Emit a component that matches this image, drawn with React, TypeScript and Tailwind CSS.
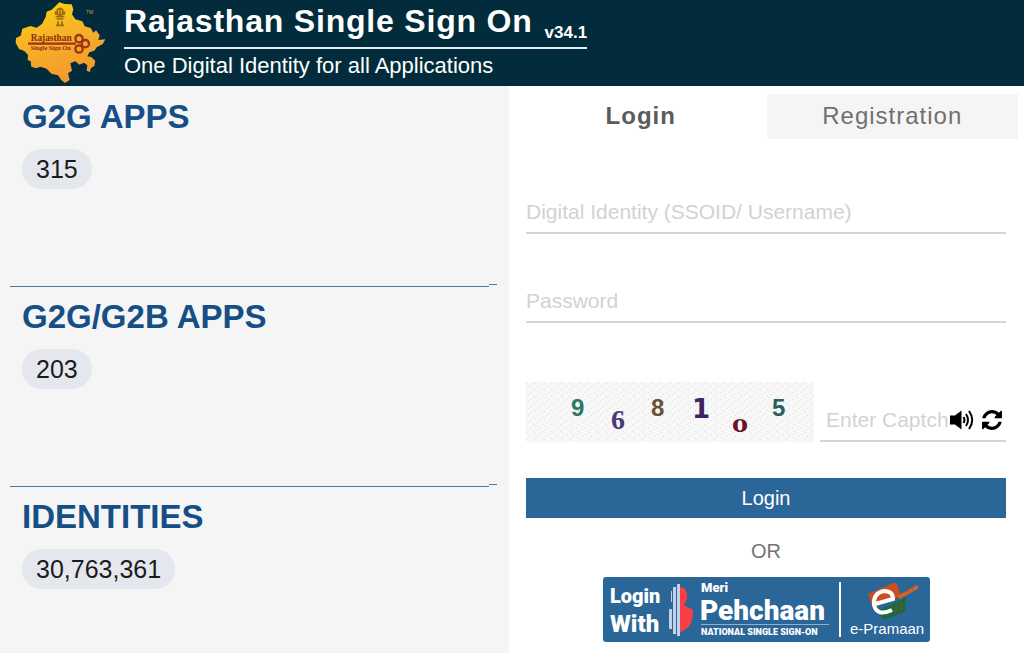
import { useState } from "react";

const stats = [
  { label: "G2G APPS", value: "315" },
  { label: "G2G/G2B APPS", value: "203" },
  { label: "IDENTITIES", value: "30,763,361" },
];

const inputClass =
  "w-full border-b-2 border-[#d5d5d5] bg-transparent text-[21px] leading-7 text-[#333] outline-none placeholder:text-[#d2d2d2] focus:border-[#2b6699]";

const tabClass =
  "pt-1 pb-[5px] text-2xl leading-9 tracking-[1px] text-[#707070] not-aria-selected:bg-[#f5f5f5] aria-selected:font-bold aria-selected:text-[#5c5c5c]";

function RajasthanLogo() {
  return (
    <svg viewBox="0 0 360 258" className="h-[86px] w-[120px] shrink-0" role="img" aria-label="Rajasthan Single Sign On">
      <defs>
        <linearGradient id="map" x1="0" y1="0" x2="0.35" y2="1">
          <stop offset="0" stopColor="#f8d808" />
          <stop offset="0.45" stopColor="#f7b526" />
          <stop offset="1" stopColor="#f49a2c" />
        </linearGradient>
      </defs>
      <path
        d="M166 19 L178 7 L194 12 L215 13 L220 28 L216 43 L226 58 L247 64 L254 79 L272 84 L280 98 L288 91 L299 106 L295 120 L316 118 L308 132 L290 142 L283 152 L268 157 L262 169 L274 171 L286 183 L283 198 L272 205 L270 216 L260 212 L262 196 L252 188 L238 194 L226 184 L211 190 L216 212 L204 220 L209 240 L195 249 L184 240 L174 226 L154 221 L140 206 L121 200 L108 205 L94 200 L92 184 L83 180 L84 165 L73 153 L57 147 L47 128 L48 114 L62 107 L67 86 L91 78 L110 83 L126 72 L137 51 L140 35 L155 29 Z"
        fill="url(#map)"
      />
      <g fill="none" stroke="#9c6a10" strokeWidth="5">
        <path d="M172 29 q8 -8 16 0 v13 q-8 6 -16 0 Z M180 25 v22 M167 34 v10 M193 34 v10" />
        <path d="M167 50 h26 M170 57 h20 M174 64 v10 M186 64 v10 M168 76 h24" />
      </g>
      <g fill="none" stroke="#9c3418" strokeWidth="7">
        <path d="M84 131 H228" />
        <circle cx="237" cy="116" r="11" />
        <circle cx="256" cy="131" r="11" />
        <circle cx="237" cy="147" r="11" />
      </g>
      <g fill="#8c2c14" fontFamily="Liberation Serif, serif" fontWeight="700">
        <text x="92" y="124" fontSize="28">Rajasthan</text>
        <text x="92" y="151" fontSize="19">Single Sign On</text>
      </g>
      <text x="258" y="43" fill="#c99730" fontFamily="Liberation Sans, sans-serif" fontSize="15">TM</text>
    </svg>
  );
}

function SpeakerIcon() {
  return (
    <svg viewBox="0 0 24 20" className="h-5 w-6">
      <path d="M0 5.500 H5 L11.500 0.500 V19.500 L5 14.500 H0 Z" fill="currentColor" />
      <g fill="none" stroke="currentColor" strokeWidth="2">
        <path d="M13.500 7 Q15.500 10 13.500 13" />
        <path d="M16 4 Q20 10 16 16" />
        <path d="M19 1 Q25.500 10 19 19" />
      </g>
    </svg>
  );
}

function RefreshIcon() {
  return (
    <svg viewBox="0 0 1536 1536" className="size-5" fill="currentColor">
      <path d="M1511 928q0 5-1 7-64 268-268 434.500t-478 166.500q-146 0-282.500-55t-243.500-157l-129 129q-19 19-45 19t-45-19-19-45v-448q0-26 19-45t45-19h448q26 0 45 19t19 45-19 45l-137 137q71 66 161 102t187 36q134 0 250-65t186-179q11-17 53-117 8-23 30-23h192q13 0 22.500 9.500t9.500 22.500zM1536 128v448q0 26-19 45t-45 19h-448q-26 0-45-19t-19-45 19-45l138-138q-148-137-349-137-134 0-250 65t-186 179q-11 17-53 117-8 23-30 23h-199q-13 0-22.500-9.500t-9.500-22.500v-7q65-268 270-434.500t480-166.500q146 0 284 55.500t245 156.500l130-129q19-19 45-19t45 19 19 45z" />
    </svg>
  );
}

function CaptchaImage() {
  return (
    <svg viewBox="0 0 288 60" className="h-[60px] w-[288px] shrink-0" role="img" aria-label="Captcha">
      <defs>
        <pattern id="grain" width="9" height="7" patternUnits="userSpaceOnUse">
          <path d="M0 1.500 h1 M5 3.500 h1 M2 5.500 h1 M7 0.500 h1" stroke="#e0e0e0" strokeWidth="1" />
          <path d="M3 0.500 h1 M7 4.500 h1 M4 6.500 h1" stroke="#ffffff" strokeWidth="1" />
        </pattern>
      </defs>
      <rect width="288" height="60" fill="#f7f7f7" />
      <rect width="288" height="60" fill="url(#grain)" />
      <g fontWeight="700">
        <g fontFamily="Liberation Sans, sans-serif" fontSize="24">
          <text x="45" y="34" fill="#2a7a62">9</text>
          <text x="125" y="34" fill="#6b5038">8</text>
          <text x="246" y="34" fill="#28605f">5</text>
        </g>
        <text x="85" y="47" fill="#4a3c78" fontFamily="Liberation Serif, serif" fontSize="28">6</text>
        <text x="166" y="36" fill="#3e2462" fontFamily="DejaVu Sans, sans-serif" fontSize="26">1</text>
        <text x="206" y="50" fill="#6e1028" fontFamily="DejaVu Serif, serif" fontSize="24">o</text>
      </g>
    </svg>
  );
}

function PehchaanBanner() {
  return (
    <svg viewBox="0 0 327 65" className="block h-[65px] w-[327px]" aria-hidden="true">
      <rect width="327" height="65" rx="3" fill="#2b6699" />
      <g fill="#fff" fontFamily="Roboto, sans-serif" fontWeight="900">
        <text x="7" y="26" fontSize="20">Login</text>
        <text x="7" y="55" fontSize="24">With</text>
        <text x="98" y="15" fontSize="13">Meri</text>
        <text x="97" y="43" fontSize="28">Pehchaan</text>
        <text x="98" y="58" fontSize="9">NATIONAL SINGLE SIGN-ON</text>
      </g>
      <path d="M98 47.500 H226" stroke="#8fb0cc" strokeWidth="1" />
      <path
        d="M74 7 h3 v52 h-3 Z M70 10 h3 v47 h-3 Z M68 14 h1 v11 h-1 Z M66 32 h3 v20 h-3 Z"
        fill="#c3d2ea"
      />
      <path
        d="M77 10 Q84 10 84 19 Q84 24 81 27 Q81 29 84 30 L90 33 Q90 42 87 48 Q83 53 77 55 Z"
        fill="#fb3e43"
      />
      <path d="M237 5 V60" stroke="#fff" strokeWidth="2" />
      <path d="M265 17 L293 5 L298 19 L270 31 Z" fill="#c94f20" />
      <path d="M294 19 L314 8 L316 11 L297 22 Z" fill="#d76328" />
      <path d="M275 34 L303 20 L302 35 L291 39 L280 43 Z" fill="#1e693b" />
      <path d="M297 16 l2 -1 M303 12 l2 3 M308 10 l2 3 M293 27 v8 M298 25 v8" stroke="#8e4a2c" strokeWidth="1" />
      <path
        d="M272 27 L290 22 Q290 14 281 14 Q270 16 271 28 Q274 40 289 33"
        fill="none"
        stroke="#fff"
        strokeWidth="4"
      />
      <text x="247" y="57" fill="#fff" fontFamily="Liberation Sans, sans-serif" fontSize="15">
        e-Pramaan
      </text>
    </svg>
  );
}

function Header() {
  return (
    <header className="flex h-[86px] bg-[#022c3b] text-white">
      <RajasthanLogo />
      <div className="flex flex-col items-start pt-px pl-1">
        <h1 className="flex items-end gap-3 border-b-2 border-[#e5eef2] pb-1.5 text-[32px] leading-10 font-bold tracking-wide">
          Rajasthan Single Sign On
          <span className="text-[17px] leading-4 tracking-normal">v34.1</span>
        </h1>
        <p className="mt-[3px] text-[22px] leading-7">One Digital Identity for all Applications</p>
      </div>
    </header>
  );
}

function StatSection({ label, value }: { label: string; value: string }) {
  return (
    <section className="group flex h-50 flex-col pt-2.5 last:h-auto">
      <h2 className="pl-3 text-[33px] leading-10 font-bold text-[#164f86]">{label}</h2>
      <span className="mt-3 ml-3 self-start rounded-full bg-[#e5e7ee] px-3.5 text-[25px] leading-10 text-[#1b1b1b]">
        {value}
      </span>
      <div className="mt-auto flex h-[3px] items-end group-last:hidden">
        <span className="h-px flex-1 bg-[#4a7bad]" />
        <span className="h-px w-2 self-start bg-[#4a7bad]" />
      </div>
    </section>
  );
}

export default function App() {
  const [tab, setTab] = useState("login");

  return (
    <div className="flex min-h-screen flex-col bg-white font-['Liberation_Sans',Arial,sans-serif]">
      <Header />
      <main className="grid flex-1 grid-cols-[509fr_515fr]">
        <div className="bg-[#f5f5f5] pt-px pr-3 pl-2.5">
          {stats.map(({ label, value }) => (
            <StatSection key={label} label={label} value={value} />
          ))}
        </div>

        <div className="px-1.5 pt-2">
          <div className="grid grid-cols-2" role="tablist">
            <button role="tab" aria-selected={tab === "login"} onClick={() => setTab("login")} className={tabClass}>
              Login
            </button>
            <button
              role="tab"
              aria-selected={tab === "registration"}
              onClick={() => setTab("registration")}
              className={tabClass}
            >
              Registration
            </button>
          </div>

          <form className="flex flex-col pt-[59px] pr-3 pl-[11px]" onSubmit={(e) => e.preventDefault()}>
            <input
              type="text"
              aria-label="Digital Identity (SSOID/ Username)"
              placeholder="Digital Identity (SSOID/ Username)"
              className={`${inputClass} pb-1.5`}
            />
            <input
              type="password"
              aria-label="Password"
              placeholder="Password"
              className={`${inputClass} mt-[53px] pb-1.5`}
            />
            <div className="mt-[59px] flex items-end gap-1.5">
              <CaptchaImage />
              <div className="relative min-w-0 flex-1">
                <input
                  type="text"
                  aria-label="Enter Captcha"
                  placeholder="Enter Captcha"
                  className={`${inputClass} pr-14 pb-1.5 pl-1.5`}
                />
                <div className="absolute top-1 right-1 flex gap-2 text-black">
                  <button type="button" aria-label="Play captcha audio">
                    <SpeakerIcon />
                  </button>
                  <button type="button" aria-label="Refresh captcha">
                    <RefreshIcon />
                  </button>
                </div>
              </div>
            </div>
            <button type="submit" className="mt-9 bg-[#2b6699] text-xl leading-10 text-white">
              Login
            </button>
            <p className="mt-[19px] text-center text-xl leading-7 text-[#757575]">OR</p>
            <a href="#pehchaan" aria-label="Login with Meri Pehchaan or e-Pramaan" className="mt-3 self-center">
              <PehchaanBanner />
            </a>
          </form>
        </div>
      </main>
    </div>
  );
}
